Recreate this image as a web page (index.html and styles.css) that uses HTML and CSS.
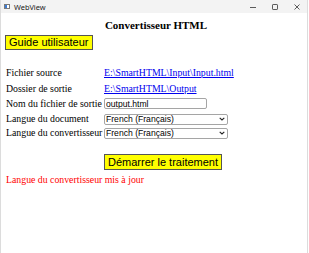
FILE: index.html
```html
<!DOCTYPE html>
<html lang="fr">
<head>
    <meta charset="UTF-8">
    <meta name="viewport" content="width=device-width, initial-scale=1.0">
    <title>WebView</title>
    <link rel="stylesheet" href="styles.css">
</head>
<body>

<div class="window">
    <!-- Window title bar -->
    <div class="titlebar">
        <svg class="app-icon" width="6" height="5" viewBox="0 0 6 5">
            <rect x="0.5" y="0.5" width="5" height="4" fill="#fff" stroke="#7a7a7a" stroke-width="1"/>
            <rect x="1" y="1" width="2" height="3" fill="#3a7bd5"/>
        </svg>
        <span class="title-text">WebView</span>
        <div class="controls">
            <svg width="8" height="8" viewBox="0 0 8 8"><line x1="1" y1="4.5" x2="7" y2="4.5" stroke="#333" stroke-width="0.8"/></svg>
            <svg width="8" height="8" viewBox="0 0 8 8"><rect x="1.5" y="1.5" width="5" height="5" rx="0.6" fill="none" stroke="#333" stroke-width="0.8"/></svg>
            <svg width="8" height="8" viewBox="0 0 8 8"><path d="M1.5 1.5 L6.5 6.5 M6.5 1.5 L1.5 6.5" stroke="#333" stroke-width="0.8"/></svg>
        </div>
    </div>

    <div class="page">
        <h1 class="heading">Convertisseur HTML</h1>
        <button class="btn" type="button">Guide utilisateur</button>

        <div class="form">
            <div class="row row-link">
                <span class="label">Fichier source</span>
                <a href="#">E:\SmartHTML\Input\Input.html</a>
            </div>
            <div class="row row-link">
                <span class="label">Dossier de sortie</span>
                <a href="#">E:\SmartHTML\Output</a>
            </div>
            <div class="row row-input">
                <label class="label" for="outputName">Nom du fichier de sortie</label>
                <input type="text" id="outputName" class="text-input" value="output.html">
            </div>
            <div class="row row-field">
                <label class="label" for="docLang">Langue du document</label>
                <div class="select-box">
                    <select id="docLang"><option>French (Français)</option></select>
                    <svg class="chevron" width="6" height="4" viewBox="0 0 6 4"><path d="M0.7 0.8 L3 3 L5.3 0.8" fill="none" stroke="#222" stroke-width="1.1"/></svg>
                </div>
            </div>
            <div class="row row-field">
                <label class="label" for="convLang">Langue du convertisseur</label>
                <div class="select-box">
                    <select id="convLang"><option>French (Français)</option></select>
                    <svg class="chevron" width="6" height="4" viewBox="0 0 6 4"><path d="M0.7 0.8 L3 3 L5.3 0.8" fill="none" stroke="#222" stroke-width="1.1"/></svg>
                </div>
            </div>
        </div>

        <div class="actions">
            <button class="btn btn-start" type="button">Démarrer le traitement</button>
        </div>

        <p class="status">Langue du convertisseur mis à jour</p>
    </div>
</div>

</body>
</html>
```

FILE: styles.css
```css
html, body {
    margin: 0;
    padding: 0;
    background: #fff;
}

.window {
    width: 308px;
    height: 253px;
    box-sizing: border-box;
    border-left: 1px solid #dcdcdc;
    border-right: 1px solid #dcdcdc;
    background: #fff;
    font-family: "Liberation Serif", "Times New Roman", serif;
    font-size: 9.8px;
}

/* Title bar */
.titlebar {
    height: 13px;
    background: #f3f3f3;
    display: flex;
    align-items: center;
    padding-left: 3px;
}

.app-icon {
    display: block;
}

.title-text {
    margin-left: 4px;
    font-family: "Noto Sans", "Liberation Sans", sans-serif;
    font-size: 7.4px;
    color: #222;
}

.controls {
    margin-left: auto;
    display: flex;
    gap: 14px;
    padding-right: 6px;
}

.controls svg {
    display: block;
}

/* Page content */
.page {
    padding: 0 0 0 4px;
}

.heading {
    margin: 6px 0 0;
    font-size: 11px;
    line-height: 13px;
    text-align: center;
    font-weight: bold;
    color: #000;
}

.btn {
    display: block;
    box-sizing: border-box;
    height: 15px;
    margin: 3px 0 0;
    padding: 0 3px;
    border: 1px solid #555;
    border-radius: 0;
    background: #ffff00;
    color: #000;
    font-family: "Liberation Sans", Arial, sans-serif;
    font-size: 11px;
    line-height: 13px;
}

.form {
    margin-top: 14px;
    padding-left: 1px;
}

.row {
    display: grid;
    grid-template-columns: 98px auto;
    align-items: center;
}

.row-link { height: 16px; }
.row-input { height: 15px; }
.row-field { height: 14px; }

.label {
    white-space: nowrap;
    color: #000;
}

.row a {
    color: #0000ee;
    text-decoration: underline;
    white-space: nowrap;
    justify-self: start;
}

.text-input {
    box-sizing: border-box;
    width: 103px;
    height: 11px;
    margin: 0;
    padding: 0 1px;
    border: 1px solid #a5a5a5;
    border-radius: 2px;
    font-family: "Liberation Sans", Arial, sans-serif;
    font-size: 8.6px;
    color: #000;
    outline: none;
}

/* Dropdowns */
.select-box {
    position: relative;
    width: 124px;
    height: 11px;
}

.select-box select {
    -webkit-appearance: none;
    appearance: none;
    box-sizing: border-box;
    width: 124px;
    height: 11px;
    margin: 0;
    padding: 0 1px;
    border: 1px solid #a5a5a5;
    border-radius: 2px;
    background: #fff;
    font-family: "Liberation Sans", Arial, sans-serif;
    font-size: 8.6px;
    line-height: 9px;
    color: #000;
}

.chevron {
    position: absolute;
    right: 3px;
    top: 4px;
    pointer-events: none;
}

.actions {
    margin-top: 15px;
    padding-left: 99px;
}

.btn-start {
    height: 16px;
    margin: 0;
}

.status {
    margin: 4px 0 0 1px;
    line-height: 11px;
    color: #ff0000;
}
```
